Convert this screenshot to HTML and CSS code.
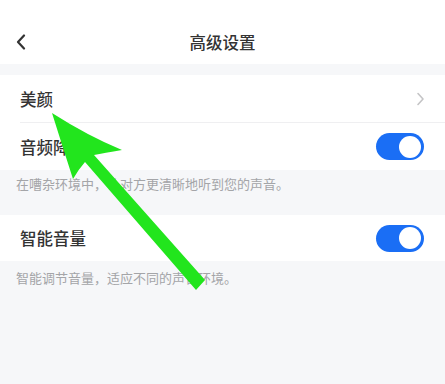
FILE: index.html
```html
<!DOCTYPE html>
<html lang="zh">
<head>
<meta charset="utf-8">
<link rel="stylesheet" href="styles.css">
</head>
<body>
<div class="page">
  <header class="nav">
    <svg class="back" width="12" height="16" viewBox="0 0 12 16"><path d="M9 1.5 L3 8 L9 14.5" fill="none" stroke="#333" stroke-width="2.2" stroke-linecap="round" stroke-linejoin="round"/></svg>
    <h1 class="title">高级设置</h1>
  </header>
  <div class="gap"></div>
  <section class="group">
    <div class="row row-a">
      <span class="label">美颜</span>
      <svg class="chev" width="9" height="14" viewBox="0 0 9 14"><path d="M2 1.5 L7 7 L2 12.5" fill="none" stroke="#c4c4c6" stroke-width="1.6" stroke-linecap="round" stroke-linejoin="round"/></svg>
    </div>
    <div class="divider"></div>
    <div class="row row-b">
      <span class="label">音频降噪</span>
      <span class="switch"><span class="knob"></span></span>
    </div>
  </section>
  <p class="desc desc-1">在嘈杂环境中，让对方更清晰地听到您的声音。</p>
  <section class="group">
    <div class="row row-c">
      <span class="label">智能音量</span>
      <span class="switch"><span class="knob"></span></span>
    </div>
  </section>
  <p class="desc desc-2">智能调节音量，适应不同的声音环境。</p>
  <svg class="arrow" width="445" height="384" viewBox="0 0 445 384">
    <path d="M52 113 Q 88 136 122 150 Q 104 153 94 155 L 205 280 L 196 290 L 85 162 Q 78 170 73 179 Q 62 145 52 113 Z" fill="#22e51d"/>
  </svg>
</div>
</body>
</html>
```

FILE: styles.css
```css
html, body {
  margin: 0;
  padding: 0;
}
body {
  background: #f6f7f9;
  font-family: "Noto Sans CJK SC", "Noto Sans", sans-serif;
  color: #333;
}
.page {
  position: relative;
  width: 445px;
  height: 384px;
  overflow: hidden;
}
.nav {
  height: 64px;
  background: #fff;
  position: relative;
  display: flex;
  align-items: center;
  justify-content: center;
  padding-top: 20px;
  box-sizing: border-box;
}
.back {
  position: absolute;
  left: 15px;
  top: 34px;
}
.title {
  margin: 0;
  font-size: 16.5px;
  font-weight: 500;
  color: #333;
  line-height: 44px;
}
.gap {
  height: 11px;
}
.group {
  background: #fff;
}
.row {
  display: flex;
  align-items: center;
  justify-content: space-between;
  padding: 0 21px 0 20px;
}
.row-a { height: 47px; }
.row-b { height: 47px; }
.row-c { height: 46px; }
.label {
  font-size: 16.5px;
  color: #333;
  font-weight: 500;
}
.chev {
  margin-right: -1px;
}
.divider {
  height: 1px;
  background: #efeff1;
  margin-left: 20px;
}
.switch {
  width: 48px;
  height: 27px;
  border-radius: 14px;
  background: #1a6ef5;
  position: relative;
}
.knob {
  position: absolute;
  right: 3px;
  top: 2.5px;
  width: 22px;
  height: 22px;
  border-radius: 50%;
  background: #fff;
}
.desc {
  margin: 0;
  font-size: 13px;
  color: #a4a5a8;
  line-height: 18px;
  padding: 5px 16px 0;
  box-sizing: border-box;
}
.desc-1 { height: 45px; }
.desc-2 { padding-top: 8px; }
.arrow {
  position: absolute;
  left: 0;
  top: 0;
  pointer-events: none;
}
```
